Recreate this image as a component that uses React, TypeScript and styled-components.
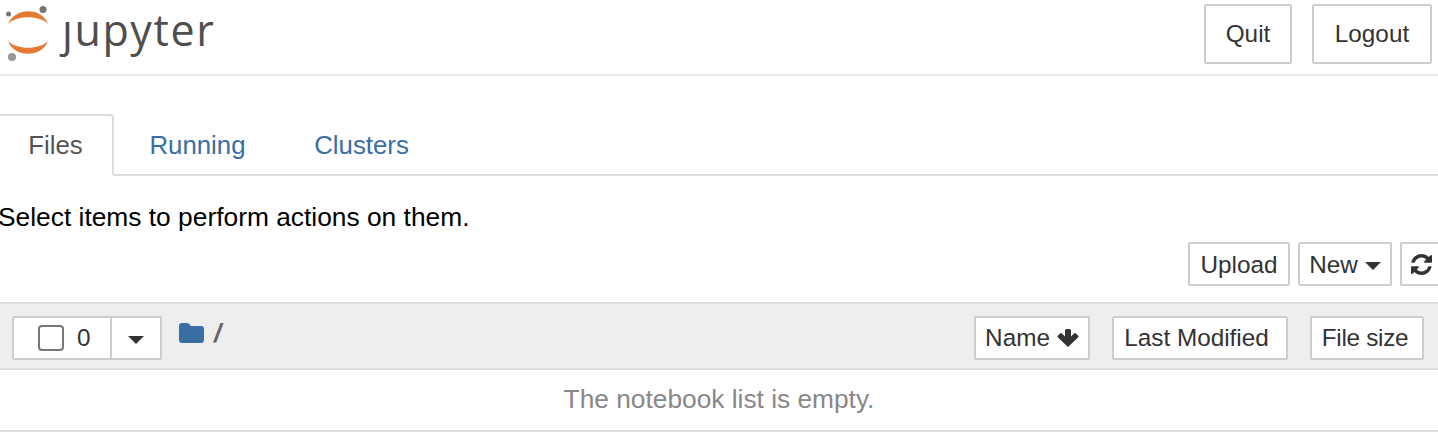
import React from "react";
import styled, { createGlobalStyle } from "styled-components";

const Global = createGlobalStyle`
  html, body { margin: 0; padding: 0; background: #fff; overflow: hidden; }
  body { font-family: "Liberation Sans", Arial, sans-serif; font-size: 26px; color: #000; width: 1438px; height: 436px; }
  * { box-sizing: border-box; }
`;

const Header = styled.header`
  height: 76px;
  border-bottom: 2px solid #e7e7e7;
  display: flex;
  justify-content: space-between;
  align-items: flex-start;
  padding: 4px 6px 0 6px;
`;
const Logo = styled.div`
  display: flex;
  align-items: flex-start;
`;
const LogoMark = styled.svg`
  width: 44px;
  height: 58px;
  display: block;
`;
const LogoText = styled.span`
  font-family: "Open Sans", sans-serif;
  font-size: 43px;
  line-height: 48px;
  color: #4e4e4e;
  margin-left: 12px;
  margin-top: 2px;
  letter-spacing: 1.6px;
`;
const HeaderActions = styled.div`
  display: flex;
  gap: 20px;
`;
const Button = styled.button<{ $w?: number; $h?: number }>`
  font: inherit;
  font-size: 24.3px;
  color: #333;
  background: #fff;
  border: 2px solid #ccc;
  border-radius: 2px;
  padding: 0;
  display: inline-flex;
  align-items: center;
  justify-content: center;
  gap: 7px;
  width: ${(p) => p.$w}px;
  height: ${(p) => p.$h}px;
  flex: none;
`;
const ToolButton = styled(Button)`
  padding-top: 1px;
`;
const SortButton = styled(Button)<{ $shift?: number; $tight?: boolean }>`
  padding-right: ${(p) => p.$shift ?? 0}px;
  letter-spacing: ${(p) => (p.$tight ? "-0.3px" : "0")};
`;
const Tabs = styled.nav`
  margin-top: 38px;
  height: 62px;
  border-bottom: 2px solid #ddd;
  display: flex;
`;
const Tab = styled.a<{ $active?: boolean; $w: number }>`
  width: ${(p) => p.$w}px;
  height: 62px;
  display: flex;
  align-items: center;
  justify-content: center;
  font-size: 25.8px;
  padding-right: 1px;
  color: ${(p) => (p.$active ? "#555" : "#3a6ea5")};
  border: ${(p) => (p.$active ? "2px solid #ddd" : "none")};
  border-left: none;
  border-bottom: ${(p) => (p.$active ? "2px solid #fff" : "none")};
  border-radius: 0 4px 0 0;
`;
const Hint = styled.p`
  margin: 26px 0 0 -2px;
  line-height: 30px;
  font-size: 26.35px;
  color: #000;
`;
const Toolbar = styled.div`
  display: flex;
  justify-content: flex-end;
  gap: 8px;
  margin: 10px -10px 0 0;
`;
const ListHeader = styled.div`
  margin-top: 16px;
  height: 68px;
  background: #eee;
  border-top: 2px solid #ddd;
  border-bottom: 2px solid #ddd;
  display: flex;
  align-items: center;
  padding: 4px 14px 0 12px;
`;
const SelectGroup = styled.div`
  display: flex;
  height: 44px;
  width: 150px;
  border: 2px solid #ccc;
  border-radius: 2px;
  background: #fff;
`;
const SelectLeft = styled.div`
  width: 98px;
  border-right: 2px solid #ccc;
  display: flex;
  align-items: center;
  padding-left: 24px;
  gap: 13px;
  color: #333;
  font-size: 24.3px;
`;
const Check = styled.span`
  width: 26px;
  height: 26px;
  border: 2px solid #767676;
  border-radius: 4px;
  background: #fff;
`;
const SelectRight = styled.div`
  flex: 1;
  display: flex;
  align-items: center;
  justify-content: center;
`;
const Caret = styled.span<{ $w: number }>`
  width: 0;
  height: 0;
  border-left: ${(p) => p.$w}px solid transparent;
  border-right: ${(p) => p.$w}px solid transparent;
  border-top: ${(p) => p.$w}px solid #333;
  margin-top: 3px;
`;
const Path = styled.div`
  margin-left: 17px;
  display: flex;
  align-items: center;
  gap: 10px;
  margin-top: -10px;
  color: #555;
`;
const FolderIcon = styled.svg`
  width: 25px;
  height: 20px;
  display: block;
`;
const Slash = styled.span`
  font-style: italic;
  font-weight: 700;
  font-size: 26px;
  line-height: 30px;
  color: #666;
`;
const Spacer = styled.div`
  flex: 1;
`;
const SortGroup = styled.div`
  display: flex;
  gap: 22px;
`;
const Empty = styled.div`
  height: 62px;
  border-bottom: 2px solid #ddd;
  display: flex;
  align-items: center;
  justify-content: center;
  color: #888;
  font-size: 26.3px;
  padding-bottom: 2px;
`;
const Glyph = styled.svg`
  display: block;
  flex: none;
`;
const RefreshIcon = styled(Glyph)`
  margin-right: 5px;
`;

export default function App() {
  return (
    <>
      <Global />
      <Header>
        <Logo>
          <LogoMark viewBox="0 0 44 58">
            <circle cx="37" cy="5.500" r="3.500" fill="#767677" />
            <circle cx="2.500" cy="10" r="2.500" fill="#767677" />
            <circle cx="6" cy="53" r="4" fill="#989798" />
            <path d="M2 20 C9 3 36 3 42 20 C34 11 10 11 2 20 Z" fill="#e37933" />
            <path d="M2 37 C10 46 34 46 42 37 C36 54 8 54 2 37 Z" fill="#e37933" />
          </LogoMark>
          <LogoText>ȷupyter</LogoText>
        </Logo>
        <HeaderActions>
          <Button $w={88} $h={60}>Quit</Button>
          <Button $w={120} $h={60}>Logout</Button>
        </HeaderActions>
      </Header>
      <Tabs>
        <Tab $active $w={114}>Files</Tab>
        <Tab $w={168}>Running</Tab>
        <Tab $w={160}>Clusters</Tab>
      </Tabs>
      <Hint>Select items to perform actions on them.</Hint>
      <Toolbar>
        <ToolButton $w={102} $h={44}>Upload</ToolButton>
        <ToolButton $w={94} $h={44}>New <Caret $w={8} /></ToolButton>
        <ToolButton $w={48} $h={44}>
          <RefreshIcon width="21" height="21" viewBox="0 0 1536 1536">
            <path fill="#333" d="M1511 928q0 5-1 7-64 268-268 434.5T764 1536q-146 0-282.5-55T238 1324l-129 129q-19 19-45 19t-45-19-19-45V960q0-26 19-45t45-19h448q26 0 45 19t19 45-19 45l-137 137q71 66 161 102t187 36q134 0 250-65t186-179q11-17 53-117 8-23 30-23h192q13 0 22.500 9.500t9.500 22.500zm25-800v448q0 26-19 45t-45 19h-448q-26 0-45-19t-19-45 19-45l138-138Q969 256 768 256q-134 0-250 65T332 500q-11 17-53 117-8 23-30 23H50q-13 0-22.500-9.500T18 608v-7q65-268 270-434.500T768 0q146 0 284 55.500T1297 212l130-129q19-19 45-19t45 19 19 45z" />
          </RefreshIcon>
        </ToolButton>
      </Toolbar>
      <ListHeader>
        <SelectGroup>
          <SelectLeft><Check /><span>0</span></SelectLeft>
          <SelectRight><Caret $w={8} /></SelectRight>
        </SelectGroup>
        <Path>
          <FolderIcon viewBox="0 0 25 20">
            <path fill="#3a6ea5" d="M0 3 Q0 0 3 0 H8 Q10 0 11 2 L12 3 H22 Q25 3 25 6 V17 Q25 20 22 20 H3 Q0 20 0 17 Z" />
          </FolderIcon>
          <Slash>/</Slash>
        </Path>
        <Spacer />
        <SortGroup>
          <SortButton $w={116} $h={44}>
            Name
            <Glyph width="22" height="18" viewBox="0 0 22 18">
              <path fill="#333" d="M11 18 L1 8.500 Q0 7.500 1 6.500 L3 4.500 Q4 3.500 5 4.500 L8 7.500 V1.500 Q8 0 9.500 0 H12.500 Q14 0 14 1.500 V7.500 L17 4.500 Q18 3.500 19 4.500 L21 6.500 Q22 7.500 21 8.500 Z" />
            </Glyph>
          </SortButton>
          <SortButton $w={176} $h={44} $shift={7}>Last Modified</SortButton>
          <SortButton $w={114} $h={44} $shift={4} $tight>File size</SortButton>
        </SortGroup>
      </ListHeader>
      <Empty>The notebook list is empty.</Empty>
    </>
  );
}
